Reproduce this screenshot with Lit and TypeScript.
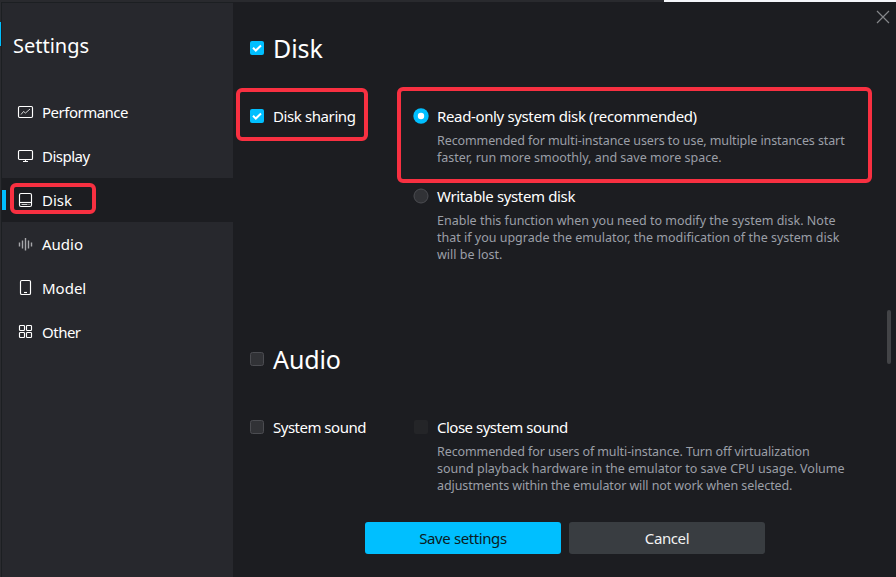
import { LitElement, html, svg, css } from "lit";
import { customElement, property } from "lit/decorators.js";
import { classMap } from "lit/directives/class-map.js";

const icons = {
  performance: svg`<rect x="1.5" y="3.5" width="14" height="11" rx="1.2"/><path class="thin" d="M4 11.5 6.5 8.5 8.5 10 13 6"/>`,
  display: svg`<rect x="1.5" y="3.5" width="14" height="9" rx="1"/><path d="M8.5 12.5v2M6 14.5h5"/>`,
  disk: svg`<rect x="2.5" y="2.5" width="12" height="13" rx="1.5"/><path d="M3 11.5h11"/><path class="thin" d="M4.5 13.5h6M11.5 13.5h1"/>`,
  audio: svg`<path class="wave" d="M2.5 7.5v4M5.5 5.5v8M8.5 3v12.5M11.5 5.5v8M14.5 7.5v4"/>`,
  model: svg`<rect x="3.5" y="1.5" width="10" height="14" rx="1.3"/><path d="M7 13.5h3"/>`,
  other: svg`<rect x="2.5" y="2.5" width="5" height="5" rx=".8"/><rect x="9.5" y="2.5" width="5" height="5" rx=".8"/><rect x="2.5" y="9.5" width="5" height="5" rx=".8"/><rect x="9.5" y="9.5" width="5" height="5" rx=".8"/>`,
};

type IconName = keyof typeof icons;

const navItems: { label: string; icon: IconName; tight?: boolean }[] = [
  { label: "Performance", icon: "performance", tight: true },
  { label: "Display", icon: "display", tight: true },
  { label: "Disk", icon: "disk" },
  { label: "Audio", icon: "audio" },
  { label: "Model", icon: "model" },
  { label: "Other", icon: "other", tight: true },
];

@customElement("check-mark")
export class CheckMark extends LitElement {
  @property() kind: "box" | "radio" = "box";
  @property({ type: Boolean }) on = false;
  @property({ type: Boolean }) off = false;

  static styles = css`
    :host { display: block; flex: none; }
    svg { display: block; }
    .fill { fill: #00bfff; }
    .idle { fill: #313236; stroke: #4b4c51; }
    .dim { fill: #242528; }
    .tick { fill: none; stroke: #fff; stroke-width: 2; }
    .dot { fill: #fff; }
  `;

  render() {
    if (this.kind === "radio") {
      return html`<svg width="16" height="16">
        ${this.on
          ? svg`<circle class="fill" cx="8" cy="8" r="7.7"/><circle class="dot" cx="8" cy="8" r="3.2"/>`
          : svg`<circle class="idle" cx="8" cy="8" r="7"/>`}
      </svg>`;
    }
    return html`<svg width="14" height="14">
      ${this.on
        ? svg`<rect class="fill" width="14" height="14" rx="2"/><path class="tick" d="M3 6.8 5.8 9.5 11 4.5"/>`
        : this.off
          ? svg`<rect class="dim" width="14" height="14" rx="2"/>`
          : svg`<rect class="idle" x=".5" y=".5" width="13" height="13" rx="2"/>`}
    </svg>`;
  }
}

@customElement("app-root")
export class AppRoot extends LitElement {
  @property() current = "Disk";

  static styles = css`
    :host {
      display: grid;
      grid-template: 2px 575px / 2px 231px 663px;
      width: 896px;
      height: 577px;
      overflow: hidden;
      background: #1c1d21;
      color: #fff;
      font: 15px/20px "Noto Sans", "Open Sans", sans-serif;
      white-space: nowrap;
      position: relative;
    }
    .top { grid-column: 1 / -1; display: flex; background: #292a2e; }
    .top-light { margin-left: auto; width: 232px; background: #f4f6fa; }
    .edge { background: linear-gradient(90deg, #2a2b2f 50%, #1c1f22 50%); padding-top: 20px; }
    .edge-mark { width: 1px; height: 24px; background: #00bfff; }
    .side { background: #27282d; border-top: 1px solid #1c1f22; }
    .side-title { margin: 0; padding: 28px 0 0 11px; height: 59px; font-size: 20px; line-height: 30px; font-weight: 400; }
    .item { position: relative; display: flex; align-items: center; height: 44px; padding-left: 15px; gap: 8px; }
    .item svg { width: 17px; height: 18px; fill: none; stroke: #fff; stroke-width: 1.15; }
    .item .thin { stroke-width: .8; }
    .item .wave { stroke: #a6a7aa; stroke-width: 1.4; }
    .tight { letter-spacing: -0.5px; }
    .current { background: #1c1d21; }
    .current::before { content: ""; position: absolute; left: 0; top: 12px; width: 4px; height: 20px; background: #00bfff; }
    .ring { position: absolute; box-sizing: border-box; border: 4px solid #f83041; border-radius: 6px; pointer-events: none; }
    .ring-nav { left: 8px; top: 5px; width: 86px; height: 31px; }
    .ring-share { left: -14px; top: -18px; width: 132px; height: 53px; }
    .ring-choice { left: -17px; top: -19px; width: 475px; height: 96px; }
    .main { padding: 31px 0 0 17px; }
    .heading { display: flex; align-items: center; gap: 9px; height: 30px; }
    .heading h2 { margin: 0; font-size: 25px; line-height: 30px; font-weight: 400; letter-spacing: -0.1px; }
    .row { display: grid; grid-template-columns: 164px 440px; }
    .row-disk { margin-top: 43px; height: 238px; }
    .row-audio { margin-top: 43px; height: 105px; }
    .label { position: relative; display: flex; align-items: center; height: 20px; gap: 9px; letter-spacing: -0.4px; }
    .choice { position: relative; display: grid; grid-template-columns: 16px 1fr; column-gap: 7px; align-items: center; align-content: start; margin-bottom: 20px; }
    .choice check-mark[kind="radio"] { margin-left: -1px; }
    .choice-title { line-height: 20px; letter-spacing: -0.36px; }
    .row-audio .choice-title, .row-audio .label { letter-spacing: -0.5px; }
    .desc { grid-column: 2; margin-top: 6px; color: #9b9fa7; font-size: 12.5px; line-height: 17px; }
    .desc div { width: max-content; }
    .desc .snug { letter-spacing: -0.1px; }
    .buttons { display: flex; gap: 8px; padding-left: 115px; }
    button { width: 196px; height: 32px; border: 0; border-radius: 3px; padding: 0; font: inherit; letter-spacing: -0.4px; background: #393d41; color: #f2f2f2; }
    .primary { background: #00bfff; color: #0b1c24; }
    .close { position: absolute; left: 876px; top: 10px; width: 14px; height: 14px; stroke: #85868a; stroke-width: 1.2; fill: none; }
    .thumb { position: absolute; left: 887px; top: 310px; width: 4px; height: 54px; border-radius: 2px; background: #434447; }
  `;

  private desc(lines: string[], snugLines: number[] = []) {
    return html`<div class="desc">${lines.map(
      (l, i) => html`<div class=${classMap({ snug: snugLines.includes(i) })}>${l}</div>`,
    )}</div>`;
  }

  render() {
    return html`
      <div class="top"><div class="top-light"></div></div>
      <div class="edge"><div class="edge-mark"></div></div>
      <nav class="side">
        <h1 class="side-title">Settings</h1>
        ${navItems.map((n) => {
          const current = n.label === this.current;
          return html`<div class=${classMap({ item: true, current })}>
            <svg viewBox="0 0 17 18">${icons[n.icon]}</svg><span class=${classMap({ tight: !!n.tight })}>${n.label}</span>
            ${current ? html`<div class="ring ring-nav"></div>` : ""}
          </div>`;
        })}
      </nav>
      <main class="main">
        <div class="heading"><check-mark on></check-mark><h2>Disk</h2></div>
        <section class="row row-disk">
          <div class="label"><check-mark on></check-mark><span>Disk sharing</span>
            <div class="ring ring-share"></div></div>
          <div>
            <div class="choice">
              <check-mark kind="radio" on></check-mark><span class="choice-title">Read-only system disk (recommended)</span>
              ${this.desc(["Recommended for multi-instance users to use, multiple instances start", "faster, run more smoothly, and save more space."], [0])}
              <div class="ring ring-choice"></div>
            </div>
            <div class="choice">
              <check-mark kind="radio"></check-mark><span class="choice-title">Writable system disk</span>
              ${this.desc(["Enable this function when you need to modify the system disk. Note", "that if you upgrade the emulator, the modification of the system disk", "will be lost."])}
            </div>
          </div>
        </section>
        <div class="heading"><check-mark></check-mark><h2>Audio</h2></div>
        <section class="row row-audio">
          <div class="label"><check-mark></check-mark><span>System sound</span></div>
          <div class="choice">
            <check-mark off></check-mark><span class="choice-title">Close system sound</span>
            ${this.desc(["Recommended for users of multi-instance. Turn off virtualization", "sound playback hardware in the emulator to save CPU usage. Volume", "adjustments within the emulator will not work when selected."], [0, 2])}
          </div>
        </section>
        <div class="buttons"><button class="primary">Save settings</button><button>Cancel</button></div>
      </main>
      <svg class="close" viewBox="0 0 14 14"><path d="M1 1 13 13M13 1 1 13"/></svg>
      <div class="thumb"></div>
    `;
  }
}
